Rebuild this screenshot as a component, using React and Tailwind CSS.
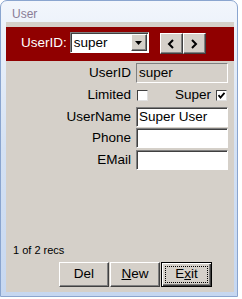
import { useState } from "react"

// classic win95-ish bevels, reused by the fields and buttons below
const sunken = "border border-t-[#808080] border-l-[#808080] border-b-white border-r-white shadow-[inset_1px_1px_0_#404040]"
const raised = "border border-t-white border-l-white border-b-[#404040] border-r-[#404040] shadow-[inset_-1px_-1px_0_#808080]"

function Field({ label, value, disabled }) {
  return (
    <>
      <span className="text-right pr-0 leading-[20px]">{label}</span>
      <div
        className={`h-[20px] flex items-center pl-[2px] ${
          disabled
            ? "bg-[#d5d0c9] border border-t-[#808080] border-l-[#808080] border-b-white border-r-white"
            : `bg-white ${sunken}`
        }`}
      >
        {value}
      </div>
    </>
  )
}

function Check({ checked }) {
  return (
    <span className="w-[11px] h-[11px] bg-white border border-t-[#404040] border-l-[#404040] border-b-[#e0e0e0] border-r-[#e0e0e0] flex items-center justify-center">
      {checked && (
        <svg width="9" height="9" viewBox="0 0 9 9">
          <path d="M1.5 4.2 L3.5 6.5 L7.5 1.8" fill="none" stroke="#000" strokeWidth="1.8" />
        </svg>
      )}
    </span>
  )
}

function Chevron({ dir }) {
  return (
    <svg width="8" height="10" viewBox="0 0 8 10">
      <path
        d={dir === "left" ? "M6 1 L2 5 L6 9" : "M2 1 L6 5 L2 9"}
        fill="none"
        stroke="#000"
        strokeWidth="2"
      />
    </svg>
  )
}

export default function App() {
  const [user] = useState({ id: "super", name: "Super User", limited: false, isSuper: true })

  return (
    <div className="w-[242px] h-[299px] bg-white overflow-hidden font-['Liberation_Sans',Arial,sans-serif] text-[13.5px] text-black">
      <div className="w-[238px] h-[297px] rounded-t-[7px] border border-[#8aa5cf] bg-gradient-to-b from-[#f2f6fc] via-[#d4e1f3] to-[#c6d7f0] flex flex-col pl-[5px] pr-[3px] pb-[4px]">

        {/* title */}
        <div className="h-[21px] pl-[6px] flex items-end text-[12px] leading-[15px] text-[#8a7c96]">User</div>

        <div className="flex-1 bg-[#d5d0c9] flex flex-col">

          {/* record picker */}
          <div className="mt-[5px] h-[34px] bg-[#900000] flex items-start pl-[15px] pt-[5px]">
            <span className="text-white leading-[21px] mr-[3px]">UserID:</span>
            <div className={`w-[79px] h-[21px] bg-white flex items-stretch ${sunken}`}>
              <span className="flex-1 pl-[3px] leading-[19px]">{user.id}</span>
              <span className={`w-[16px] mt-[1px] mb-[1px] mr-[1px] bg-[#d5d0c9] flex items-center justify-center ${raised}`}>
                <svg width="7" height="4" viewBox="0 0 7 4"><path d="M0 0 H7 L3.5 4 Z" fill="#000" /></svg>
              </span>
            </div>
            <div className="flex ml-[11px] mt-[1px]">
              <button className={`w-[23px] h-[21px] bg-[#d5d0c9] flex items-center justify-center ${raised}`}>
                <Chevron dir="left" />
              </button>
              <button className={`w-[23px] h-[21px] bg-[#d5d0c9] flex items-center justify-center ${raised}`}>
                <Chevron dir="right" />
              </button>
            </div>
          </div>

          {/* fields */}
          <div className="mt-[2px] grid grid-cols-[125px_92px] gap-x-[5px]">
            <Field label="UserID" value={user.id} disabled />

            <span className="text-right leading-[22px] mt-[1px]">Limited</span>
            <div className="h-[22px] mt-[1px] flex items-center justify-between pl-[1px] pr-[1px]">
              <Check checked={user.limited} />
              <span className="flex items-center gap-[5px]">
                Super <Check checked={user.isSuper} />
              </span>
            </div>

            <div className="col-span-2 h-[1px]" />
            <Field label="UserName" value={user.name} />
            <div className="col-span-2 h-[1px]" />
            <Field label="Phone" value="" />
            <div className="col-span-2 h-[2px]" />
            <Field label="EMail" value="" />
          </div>

          {/* footer */}
          <div className="mt-auto pb-[5px]">
            <p className="pl-[7px] text-[11px] leading-[13px]">1 of 2 recs</p>
            <div className="mt-[5px] pl-[53px] flex gap-[1px]">
              <button className={`w-[50px] h-[25px] bg-[#d5d0c9] ${raised}`}>Del</button>
              <button className={`w-[50px] h-[25px] bg-[#d5d0c9] ${raised}`}>
                <span className="underline">N</span>ew
              </button>
              <button className="relative w-[51px] h-[25px] bg-[#d5d0c9] border border-black shadow-[inset_1px_1px_0_#fff,inset_-1px_-1px_0_#404040,inset_-2px_-2px_0_#808080]">
                E<span className="underline">x</span>it
                <span className="absolute inset-[3px] border border-dotted border-black" />
              </button>
            </div>
          </div>

        </div>
      </div>
    </div>
  )
}
